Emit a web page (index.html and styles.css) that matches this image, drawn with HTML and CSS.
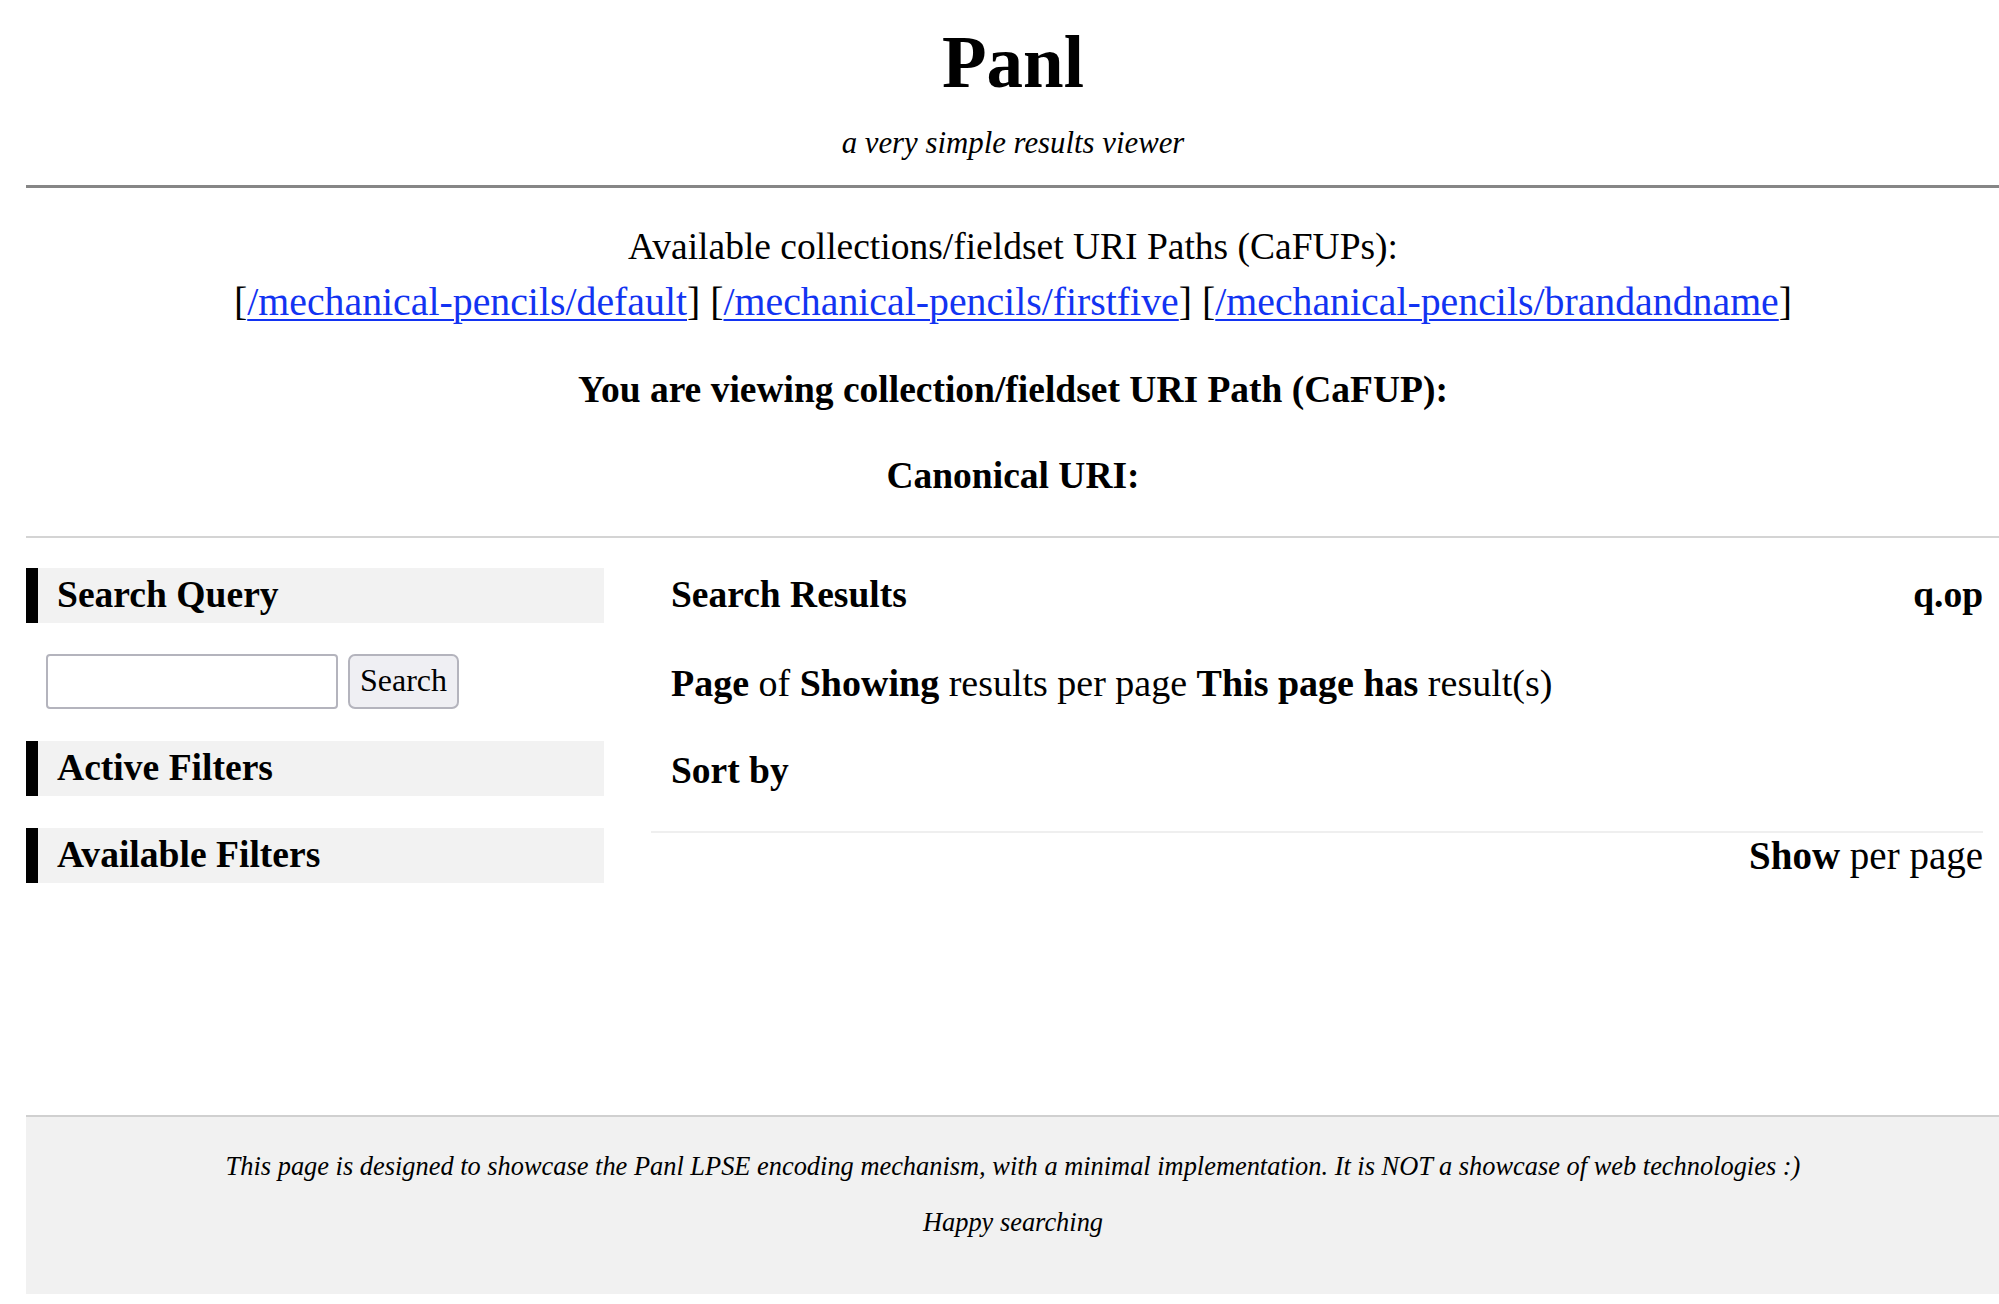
FILE: index.html
```html
<!DOCTYPE html>
<html lang="en">
<head>
<meta charset="utf-8">
<title>Panl</title>
<link rel="stylesheet" href="styles.css">
</head>
<body>
<div class="page">
  <header class="masthead">
    <h1 class="title">Panl</h1>
    <p class="tagline">a very simple results viewer</p>
  </header>
  <hr class="rule-main">
  <section class="cafups">
    <p class="avail-label">Available collections/fieldset URI Paths (CaFUPs):</p>
    <p class="avail-links">[<a href="#">/mechanical-pencils/default</a>] [<a href="#">/mechanical-pencils/firstfive</a>] [<a href="#">/mechanical-pencils/brandandname</a>]</p>
    <p class="viewing"><strong>You are viewing collection/fieldset URI Path (CaFUP):</strong></p>
    <p class="canonical"><strong>Canonical URI:</strong></p>
  </section>
  <hr class="rule-thin">
  <div class="layout">
    <aside class="sidebar">
      <h3 class="side-head">Search Query</h3>
      <form class="search-form">
        <input class="search-input" type="text">
        <button class="search-btn" type="button">Search</button>
      </form>
      <h3 class="side-head side-gap">Active Filters</h3>
      <h3 class="side-head side-gap">Available Filters</h3>
    </aside>
    <main class="results">
      <div class="results-head">
        <h2 class="results-title">Search Results</h2>
        <span class="qop">q.op</span>
      </div>
      <p class="results-info"><strong>Page</strong> of <strong>Showing</strong> results per page <strong>This page has</strong> result(s)</p>
      <p class="sort"><strong>Sort by</strong></p>
      <div class="divider"></div>
      <p class="perpage"><strong>Show</strong> per page</p>
    </main>
  </div>
  <footer class="footer">
    <p class="foot-line">This page is designed to showcase the Panl LPSE encoding mechanism, with a minimal implementation. It is NOT a showcase of web technologies :)</p>
    <p class="foot-line foot-second">Happy searching</p>
  </footer>
</div>
</body>
</html>
```
FILE: styles.css
```css
html, body {
  margin: 0;
  padding: 0;
  background: #ffffff;
  overflow: hidden;
}

body {
  font-family: "Liberation Serif", "Times New Roman", serif;
  font-size: 37.5px;
  color: #000000;
}

.page {
  margin-left: 26px;
  width: 1974px;
}

.masthead {
  text-align: center;
}

.title {
  margin: 0;
  padding-top: 23px;
  font-size: 73px;
  line-height: 80px;
  font-weight: bold;
}

.tagline {
  margin: 20px 0 0;
  font-style: italic;
  font-size: 30.8px;
  line-height: 40px;
}

.rule-main {
  margin: 22px 0 0;
  border: 0;
  height: 3px;
  background: #868686;
}

.cafups {
  text-align: center;
}

.cafups p {
  margin: 0;
  line-height: 55px;
}

.avail-label {
  padding-top: 31px;
}

.avail-links {
  font-size: 39.8px;
  padding-top: 1px;
  margin-left: -6px;
}

.avail-links a {
  color: #1233f2;
  text-decoration: underline;
  text-decoration-thickness: 2px;
  text-underline-offset: 4px;
}

.cafups .viewing {
  margin-top: 32px;
}

.cafups .canonical {
  margin-top: 31px;
}

.rule-thin {
  margin: 33px 0 0;
  border: 0;
  height: 2px;
  background: #d4d4d4;
}

.layout {
  display: flex;
  gap: 47px;
  padding-top: 30px;
  min-height: 577px;
  box-sizing: border-box;
}

.sidebar {
  flex: 0 0 578px;
  display: flex;
  flex-direction: column;
}

.side-head {
  margin: 0;
  border-left: 12px solid #000000;
  background: #f2f2f2;
  padding: 2px 0 3px 19px;
  font-size: 37.6px;
  line-height: 50px;
  font-weight: bold;
}

.side-gap {
  margin-top: 32px;
}

.search-form {
  margin: 31px 0 0;
  padding-left: 20px;
  display: flex;
  gap: 10px;
}

.search-input {
  width: 292px;
  height: 55px;
  box-sizing: border-box;
  border: 2px solid #b4b4bd;
  border-radius: 4px;
  background: #ffffff;
  margin: 0;
}

.search-btn {
  width: 111px;
  height: 55px;
  box-sizing: border-box;
  margin: 0;
  padding: 0 0 2px;
  font-family: inherit;
  font-size: 32px;
  color: #000000;
  background: #efeff3;
  border: 2px solid #b4b4bd;
  border-radius: 7px;
}

.results {
  flex: 1 1 auto;
  padding: 1px 17px 0 20px;
  margin-left: -20px;
}

.results-head {
  display: flex;
  justify-content: space-between;
  align-items: baseline;
  line-height: 51px;
  padding-left: 20px;
}

.results-title {
  margin: 0;
  font-size: 37.5px;
  font-weight: bold;
}

.qop {
  font-weight: bold;
}

.results p {
  margin: 0;
  line-height: 55px;
  padding-left: 20px;
}

.results .results-info {
  margin-top: 36px;
  font-size: 38px;
}

.results .sort {
  margin-top: 32px;
}

.divider {
  margin-top: 33px;
  height: 2px;
  background: #efefef;
}

.results .perpage {
  line-height: 42px;
  padding-top: 2px;
  font-size: 39px;
  text-align: right;
}

.footer {
  border-top: 2px solid #d0d0d0;
  background: #f1f1f1;
  padding: 29px 0 52px;
  text-align: center;
}

.foot-line {
  margin: 0;
  font-style: italic;
  font-size: 26.4px;
  line-height: 40px;
}

.foot-second {
  margin-top: 16px;
}
```
